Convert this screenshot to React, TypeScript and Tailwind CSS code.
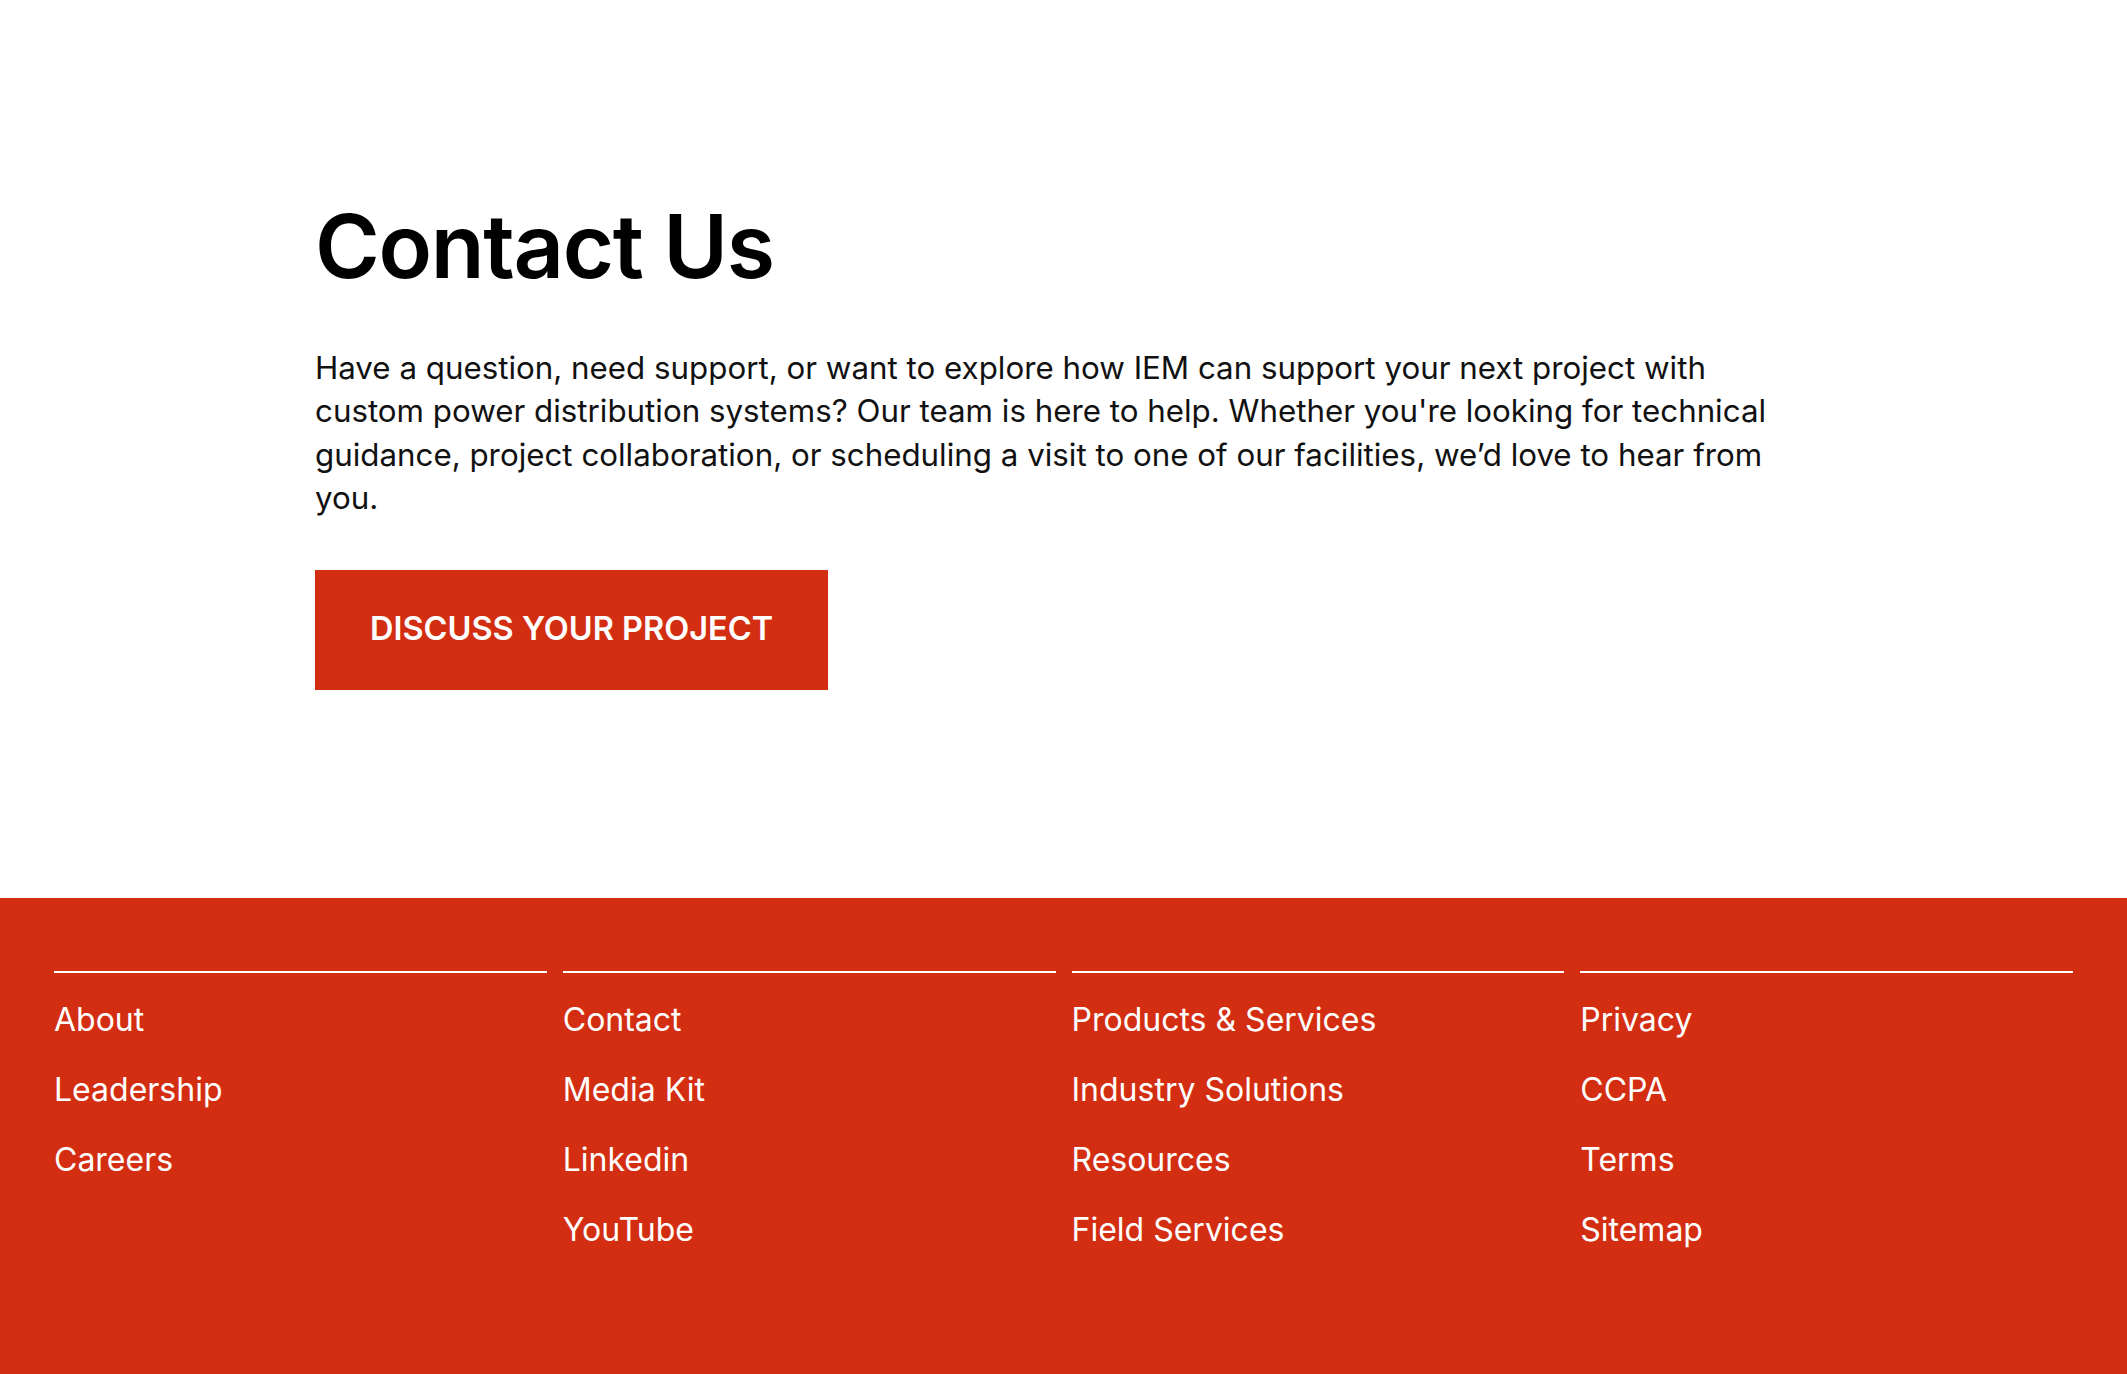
import React from 'react';

const FOOTER_COLUMNS: string[][] = [
  ['About', 'Leadership', 'Careers'],
  ['Contact', 'Media Kit', 'Linkedin', 'YouTube'],
  ['Products & Services', 'Industry Solutions', 'Resources', 'Field Services'],
  ['Privacy', 'CCPA', 'Terms', 'Sitemap'],
];

export default function App() {
  return (
    <div className="min-h-screen bg-white text-black" style={{ fontFamily: 'Inter, "Noto Sans", sans-serif' }}>
      {/* Contact intro */}
      <section className="h-[898px] pt-[202px] pl-[315px] pr-[300px]">
        <h1 className="text-[88px] leading-none font-semibold tracking-[-0.015em]">Contact Us</h1>
        <p className="mt-[57px] max-w-[1480px] text-[31.3px] leading-[43.4px] text-[#111]">
          Have a question, need support, or want to explore how IEM can support your next project with custom power
          distribution systems? Our team is here to help. Whether you're looking for technical guidance, project
          collaboration, or scheduling a visit to one of our facilities, we’d love to hear from you.
        </p>
        <a
          href="#"
          className="mt-[49px] inline-flex h-[120px] items-center bg-[#d42e12] px-[55px] text-[32.5px] font-semibold uppercase text-white"
        >
          Discuss Your Project
        </a>
      </section>

      {/* Footer */}
      <footer className="min-h-[476px] bg-[#d42e12] px-[54px] pt-[73px] pb-[100px] text-white">
        <div className="grid grid-cols-4 gap-[16px]">
          {FOOTER_COLUMNS.map((col, i) => (
            <div key={i} className="border-t-2 border-white pt-[12px]">
              <ul className="flex flex-col">
                {col.map(link => (
                  <li key={link} className="text-[32px] leading-[70px]">
                    <a href="#">{link}</a>
                  </li>
                ))}
              </ul>
            </div>
          ))}
        </div>
      </footer>
    </div>
  );
}
